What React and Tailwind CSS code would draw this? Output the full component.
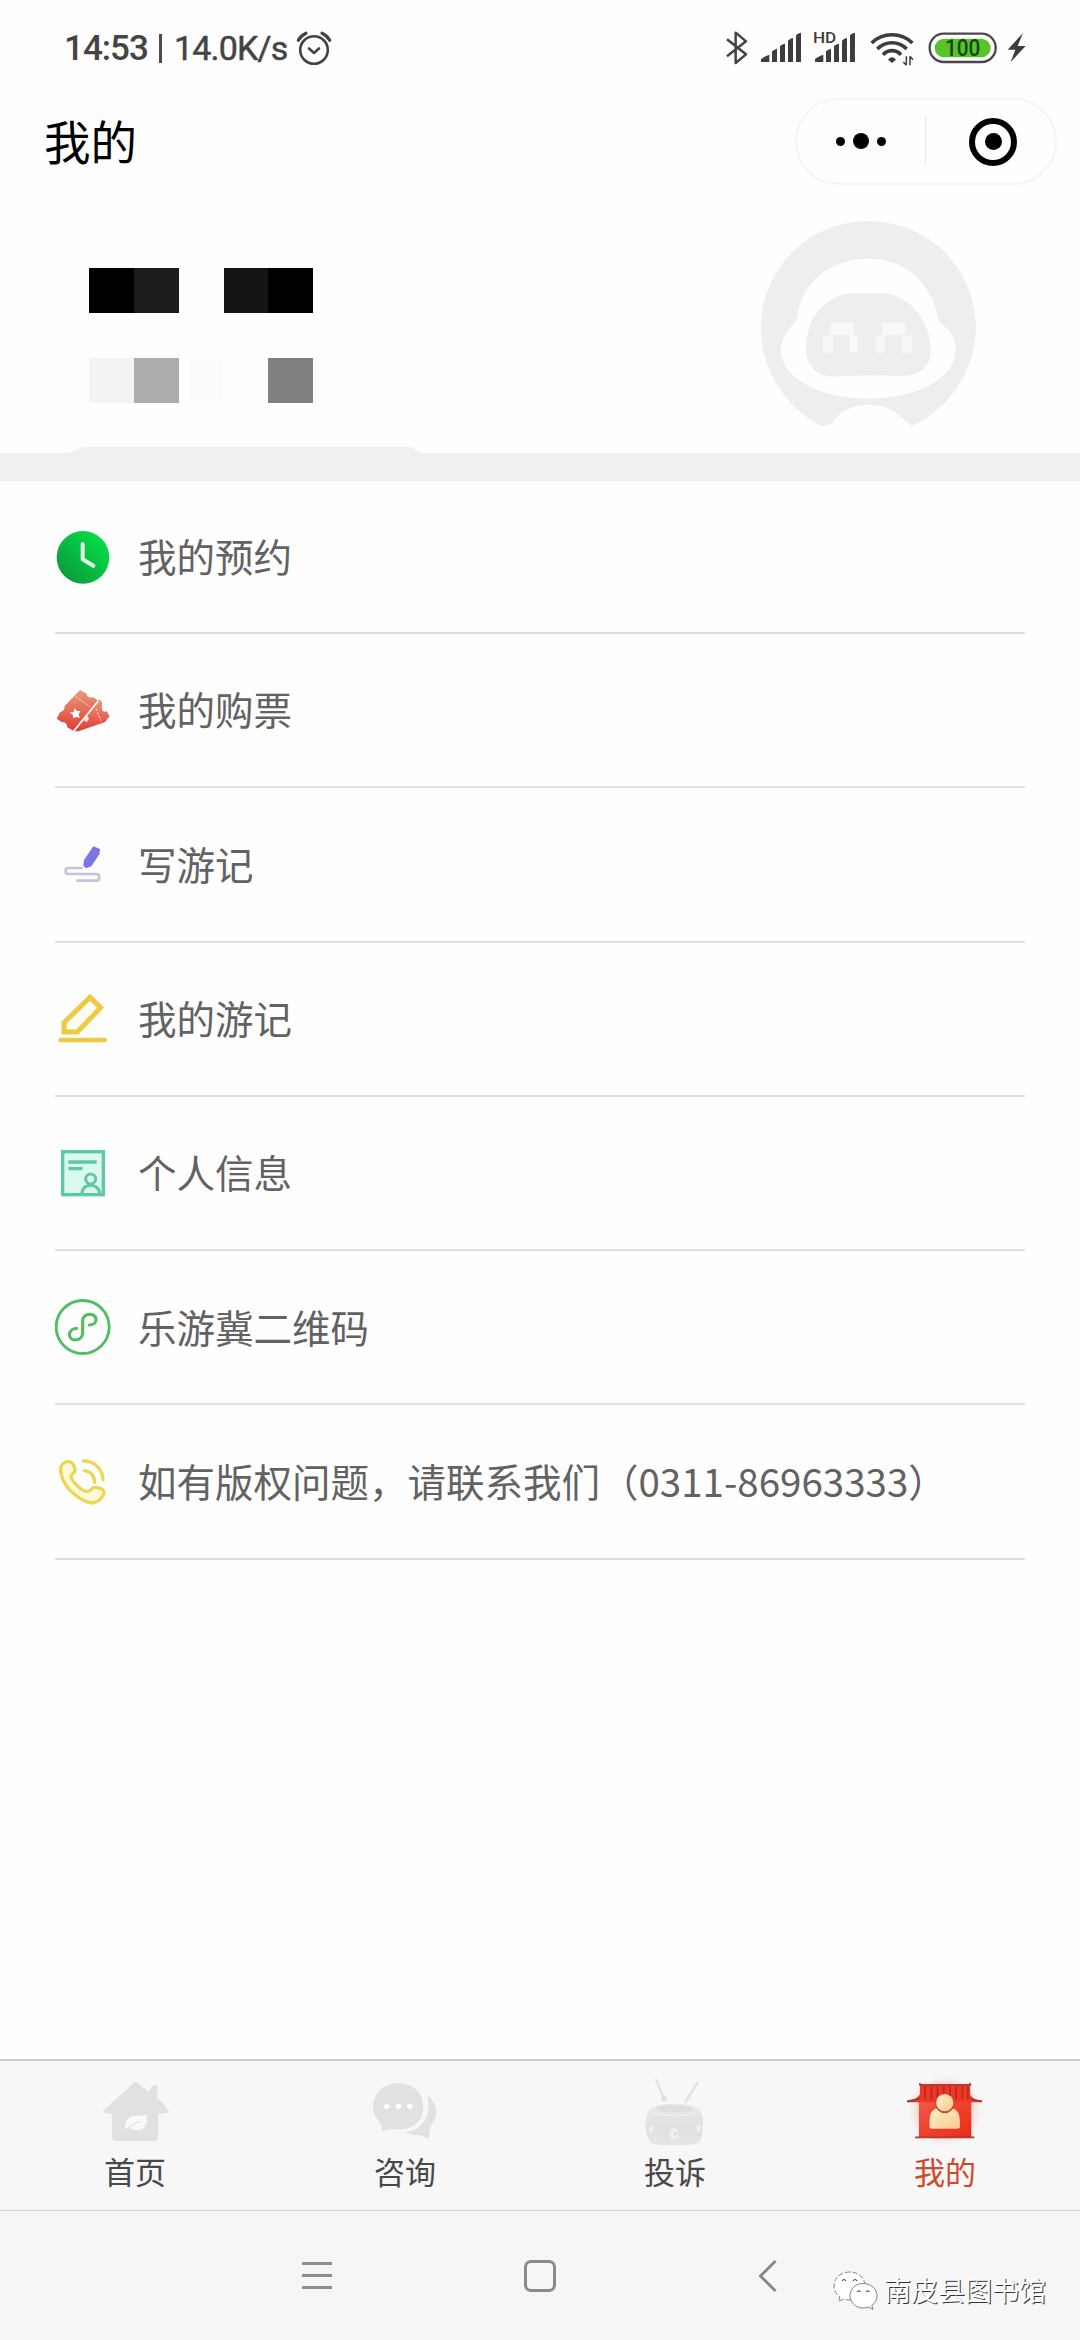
import React from "react";

function StatusBar() {
  return (
    <div className="flex h-24 items-center pl-[64px] pr-[54px] text-[#444]">
      <span className="w-[84px] font-['Roboto'] text-[35px] leading-none font-medium tracking-[-1px] whitespace-nowrap">14:53</span>
      <span className="ml-[11px] h-[29px] w-[3px] bg-[#4c4c4c]" />
      <span className="ml-[12px] w-[114px] font-['Roboto'] text-[34px] leading-none tracking-[-0.8px] whitespace-nowrap [-webkit-text-stroke:0.5px_#444]">14.0K/s</span>
      <svg className="ml-[8px] h-[36px] w-[36px]" viewBox="0 0 36 36" fill="none" stroke="#444" strokeWidth="2.6" strokeLinecap="round" strokeLinejoin="round">
        <circle cx="18" cy="20" r="13.8" />
        <path d="M13 18.5l5 4.5 5-4.5" />
        <path d="M2.3 10.3C4 7 6.700 4.700 10 3.200M33.700 10.300C32 7 29.300 4.700 26 3.200" strokeWidth="3.200" />
      </svg>
      <div className="ml-auto flex items-center">
        <svg className="h-9 w-[25px]" viewBox="135 90 75 108" fill="none" stroke="#444" strokeWidth="7.500">
          <path d="M141 118L198 163L167 189V98L198 124L141 169" strokeLinejoin="round" />
        </svg>
        <svg className="ml-[10px] h-9 w-[42px]" viewBox="240 90 126 108" fill="#3d3d3d">
          <path d="M243 186V178Q250 170 268 164V186ZM276 186V154Q283 148 291 146V186ZM300 186V138Q307 132 315 131V186ZM324 186V122Q331 115 339 114V186ZM348 186V106Q355 99 363 98V186Z" />
        </svg>
        <svg className="ml-[11px] h-9 w-[43.300px]" viewBox="399 90 130 108" fill="#3d3d3d">
          <path d="M405 186V178Q412 170 430 164V186ZM438 186V154Q445 148 453 146V186ZM462 186V138Q469 132 477 131V186ZM486 186V122Q493 115 501 114V186ZM510 186V106Q517 99 525 98V186Z" />
          <text x="399" y="129" fontFamily="Roboto" fontSize="46" fontWeight="500" textLength="70" lengthAdjust="spacingAndGlyphs">HD</text>
        </svg>
        <svg className="ml-[13.700px] h-9 w-[45px]" viewBox="570 90 135 108" fill="none" stroke="#3d3d3d" strokeWidth="11">
          <path d="M575 129C608 96 664 96 697 129M592 147C616 122 656 122 680 147M609 164C624 148 648 148 663 164" />
          <path d="M624 179Q636 165 648 179L636 189Z" fill="#3d3d3d" stroke="none" />
          <path d="M679 169V196M690 169V196M679 196l-9-10M690 169l9 10" strokeWidth="4.500" />
        </svg>
        <svg className="ml-[13.300px] h-9 w-[69px]" viewBox="745 90 207 108">
          <rect x="750" y="101" width="198" height="85" rx="42" fill="#fff" stroke="#484848" strokeWidth="7" />
          <rect x="765" y="116" width="168" height="56" rx="28" fill="#58c32b" />
          <text x="849" y="169" textAnchor="middle" textLength="106" lengthAdjust="spacingAndGlyphs" fontFamily="Roboto" fontSize="70" fontWeight="500" fill="#184510">100</text>
        </svg>
        <svg className="ml-[8.700px] h-9 w-5" viewBox="978 90 60 108" fill="#3d3d3d">
          <path d="M1029 99L983 149H1006L992 186L1037 138H1013Z" />
        </svg>
      </div>
    </div>
  );
}

function TitleBar() {
  return (
    <div className="flex h-[90px] items-center justify-between pr-[23px] pl-[44px]">
      <h1 className="pb-[2px] text-[46.500px] leading-none font-normal text-black">我的</h1>
      <div className="flex h-[87px] w-[262px] items-center rounded-full border-2 border-[#f5f5f5]">
        <div className="flex w-[128px] items-center justify-center gap-[8px]">
          <span className="h-[9px] w-[9px] rounded-full bg-black" />
          <span className="h-4 w-4 rounded-full bg-black" />
          <span className="h-[9px] w-[9px] rounded-full bg-black" />
        </div>
        <span className="h-12 w-px bg-[#e6e6e6]" />
        <div className="flex flex-1 items-center justify-center pl-[5px]">
          <span className="mt-[1px] flex h-12 w-12 items-center justify-center rounded-full border-[6.500px] border-black">
            <span className="h-[17px] w-[17px] rounded-full bg-black" />
          </span>
        </div>
      </div>
    </div>
  );
}

function Profile() {
  return (
    <div className="flex h-[267px] justify-between pr-[100px] pl-[89px]">
      <div className="flex flex-col pt-[82px]">
        <div className="flex h-[45px]">
          <span className="w-[45px] bg-black" />
          <span className="w-[45px] bg-[#1c1c1c]" />
          <span className="w-[45px]" />
          <span className="w-[44px] bg-[#141414]" />
          <span className="w-[45px] bg-black" />
        </div>
        <div className="mt-[45px] flex h-[45px]">
          <span className="w-[45px] bg-[#f3f3f3]" />
          <span className="w-[45px] bg-[#acacac]" />
          <span className="ml-[11px] w-[33px] bg-[#fcfcfc]" />
          <span className="ml-[45px] w-[45px] bg-[#808080]" />
        </div>
      </div>
      <svg className="mt-[31px] h-[213px] w-[224px]" viewBox="168 51 672 639" fill="#eee">
        <path d="M360 676C250 615 183 505 183 385C183 205 326 63 505 63C684 63 828 205 828 385C828 505 752 625 636 678C590 640 570 615 510 614C450 614 410 640 400 668Q380 678 360 676Z" />
        <path d="M505 176C610 176 695 240 717 365C745 385 767 410 767 450C767 540 640 596 505 596C370 596 243 540 243 450C243 410 265 390 292 360C300 240 400 176 505 176Z" fill="#fefefe" />
        <path d="M440 280H565C640 300 692 370 692 450C692 500 660 524 610 528Q505 522 400 530C350 528 318 500 318 440C322 350 370 300 440 280Z" />
        <path d="M369 458V407H392V383H460V407H472V458H448V405H399V458ZM527 458V407H548V383H614V407H636V458H606V405H554V458Z" fill="#f8f8f8" />
        <path d="M392 368H460V400H392ZM546 368H616V400H546Z" fill="#f8f8f8" />
      </svg>
    </div>
  );
}

function ClockIcon() {
  return (
    <svg className="h-14 w-14" viewBox="75 112 168 168">
      <defs>
        <linearGradient id="clock" x1="0" y1="1" x2="1" y2="0">
          <stop offset="0.1" stopColor="#0a9a3c" />
          <stop offset="0.850" stopColor="#05dc46" />
        </linearGradient>
      </defs>
      <circle cx="159" cy="197" r="79" fill="url(#clock)" />
      <path d="M158 157V203L190 222" fill="none" stroke="#e4ffea" strokeWidth="12" strokeLinecap="round" strokeLinejoin="round" />
    </svg>
  );
}

function TicketIcon() {
  return (
    <svg className="h-14 w-14" viewBox="75 576 168 168">
      <defs>
        <linearGradient id="ticket" x1="0" y1="0" x2="0" y2="1">
          <stop offset="0" stopColor="#eb9a7e" />
          <stop offset="1" stopColor="#df3d32" />
        </linearGradient>
      </defs>
      <path d="M150 600L170 611Q172 626 190 622L204 632L130 722L112 712Q110 695 96 697L80 686L90 667Q105 662 104 648Z" fill="url(#ticket)" />
      <path d="M207 628L216 635V660Q222 668 230 663L239 680Q228 688 226 696L145 724H134Z" fill="url(#ticket)" />
      <path d="M134 654L141 663L151 663L146 673L149 684L139 681L129 685L129 675L119 668L131 666Z" fill="#fff" />
      <path d="M137 620L179 649M198 656L213 692" fill="none" stroke="#ffe4dc" strokeWidth="3" strokeDasharray="7 5" />
      <path d="M204 634L132 722" stroke="#fff" strokeWidth="5" />
      <path d="M162 692L171 675L177 686L170 696Z" fill="#ffe4dc" />
    </svg>
  );
}

function WriteIcon() {
  return (
    <svg className="h-14 w-14" viewBox="75 109 168 168">
      <path d="M158 205H114Q107 205 107 214Q107 223 114 223H200Q208 223 208 233Q208 243 200 243H139" fill="none" stroke="#c3c3dd" strokeWidth="8" />
      <path d="M190 140L210 148L208 164L184 200L168 206L160 199L162 181Z" fill="#7d75e3" />
    </svg>
  );
}

function EditIcon() {
  return (
    <svg className="h-14 w-14" viewBox="75 572 168 168" fill="none" stroke="#edca42">
      <path d="M102 667L180 591L212 622L142 695H102Z" strokeWidth="15" fill="#fffdf2" />
      <path d="M92 719H224" strokeWidth="14" strokeLinecap="round" />
    </svg>
  );
}

function ProfileIcon() {
  return (
    <svg className="h-14 w-14" viewBox="75 75 168 168" fill="none" stroke="#5cc9a0" strokeWidth="10">
      <rect x="98" y="95" width="122" height="129" fill="#dcf9ee" />
      <path d="M115 126H200M115 146H158" />
      <circle cx="182" cy="177" r="15" strokeWidth="9" />
      <path d="M155 223Q158 196 182 196Q206 196 210 223" strokeWidth="9" />
    </svg>
  );
}

function MiniProgramIcon() {
  return (
    <svg className="h-14 w-14" viewBox="75 538 168 168" fill="none" stroke="#54bd64">
      <circle cx="158" cy="622" r="79.500" strokeWidth="8.500" />
      <path d="M178 616C205 616 204 584 180 584C166 584 158 592 158 604V640C158 652 150 661 136 661C112 661 112 627 140 626" strokeWidth="9.500" strokeLinecap="round" />
    </svg>
  );
}

function PhoneIcon() {
  return (
    <svg className="h-14 w-14" viewBox="75 101 168 168" fill="none" stroke="#ead75a" strokeWidth="10" strokeLinecap="round" strokeLinejoin="round">
      <path d="M103 127Q120 119 129 131L135 145Q137 154 127 161Q119 167 127 179Q144 203 164 212Q177 216 183 207Q191 198 203 202L216 206Q226 214 219 226Q206 246 187 248Q157 247 118 208Q93 178 92 151Q91 133 103 127Z" fill="#fff9d8" />
      <path d="M160 122C194 122 218 147 219 179M163 151C182 153 193 166 194 186" />
    </svg>
  );
}

const rows = [
  { label: "我的预约", Icon: ClockIcon },
  { label: "我的购票", Icon: TicketIcon },
  { label: "写游记", Icon: WriteIcon },
  { label: "我的游记", Icon: EditIcon },
  { label: "个人信息", Icon: ProfileIcon },
  { label: "乐游冀二维码", Icon: MiniProgramIcon },
  { label: "如有版权问题，请联系我们（0311-86963333）", Icon: PhoneIcon },
];

function Menu() {
  return (
    <ul className="mx-[55px] flex flex-col">
      {rows.map(({ label, Icon }) => (
        <li key={label} className="flex h-[154.300px] items-center gap-[27px] border-b-2 border-[#dfdfdf] first:h-[153px]">
          <Icon />
          <span className="pb-[3px] text-[38.500px] leading-none whitespace-nowrap text-[#626262]">{label}</span>
        </li>
      ))}
    </ul>
  );
}

function HomeIcon() {
  return (
    <svg className="h-20 w-[90px]" viewBox="261 75 261.400 240" preserveAspectRatio="none" fill="#e1e1e1">
      <path d="M391 126Q397 126 402 132L432 155L442 138Q450 130 457 139V175Q480 193 490 216Q478 222 459 221V290Q458 303 445 303H340Q326 303 325 290V222Q308 222 298 216Q304 204 318 195Z" />
      <path d="M362 268Q362 235 385 229L426 225V246Q422 267 402 270Q385 270 375 264Z" fill="#f9f9f9" />
      <path d="M366 270Q382 252 408 245" fill="none" stroke="#e1e1e1" strokeWidth="4" />
    </svg>
  );
}

function ChatIcon() {
  return (
    <svg className="h-20 w-[90px]" viewBox="1045 75 261.400 240" preserveAspectRatio="none" fill="#e1e1e1">
      <path d="M1157 130C1199 130 1229 160 1229 200C1229 245 1195 270 1155 268Q1134 265 1109 274Q1109 252 1098 240C1087 228 1083 216 1083 200C1083 160 1115 130 1157 130Z" />
      <path d="M1241 166Q1259 180 1268 213Q1264 240 1249 260L1244 297Q1228 284 1200 284L1176 277C1215 274 1240 245 1244 205Q1244 185 1241 166Z" />
      <g fill="#fff">
        <ellipse cx="1123" cy="199" rx="8" ry="8" />
        <ellipse cx="1157" cy="199" rx="8" ry="8" />
        <ellipse cx="1190" cy="199" rx="8" ry="8" />
      </g>
    </svg>
  );
}

function DrumIcon() {
  return (
    <svg className="h-20 w-[90px]" viewBox="261 75 261.400 240" preserveAspectRatio="none">
      <defs>
        <linearGradient id="drum" x1="0" y1="0" x2="0" y2="1">
          <stop offset="0" stopColor="#e9e9e9" />
          <stop offset="0.6" stopColor="#e0e0e0" />
          <stop offset="1" stopColor="#e6e6e6" />
        </linearGradient>
      </defs>
      <path d="M337 120L362 180M457 128L422 186" stroke="#e2e2e2" strokeWidth="7" strokeLinecap="round" />
      <ellipse cx="360" cy="176" rx="9" ry="8" fill="#e0e0e0" />
      <path d="M325 202Q350 191 390 191Q435 191 458 203Q474 222 473 252Q472 290 462 308Q430 319 390 319Q350 319 320 308Q306 285 306 250Q308 216 325 202Z" fill="url(#drum)" />
      <ellipse cx="391" cy="206" rx="54" ry="11" fill="#dedede" />
      <path d="M322 210Q330 226 391 227Q450 226 463 209" fill="none" stroke="#eeeeee" strokeWidth="5" />
      <ellipse cx="389" cy="281" rx="13" ry="17" fill="#f1f1f1" />
      <path d="M390 275L401 280L391 290Z" fill="#dcdcdc" />
      <ellipse cx="323" cy="267" rx="6" ry="12" fill="#f0f0f0" />
      <ellipse cx="460" cy="265" rx="6" ry="11" fill="#f0f0f0" />
    </svg>
  );
}

function MineIcon() {
  return (
    <svg className="h-20 w-[90px]" viewBox="1045 75 261.400 240" preserveAspectRatio="none">
      <defs>
        <radialGradient id="glow">
          <stop offset="0.650" stopColor="#ffd0cc" />
          <stop offset="1" stopColor="#f7f7f7" stopOpacity="0" />
        </radialGradient>
        <linearGradient id="house" x1="0" y1="0" x2="1" y2="1">
          <stop offset="0" stopColor="#f35a47" />
          <stop offset="1" stopColor="#ec2816" />
        </linearGradient>
        <linearGradient id="person" x1="0" y1="0" x2="1" y2="1">
          <stop offset="0" stopColor="#fff0cc" />
          <stop offset="1" stopColor="#fbc890" />
        </linearGradient>
      </defs>
      <ellipse cx="1176" cy="212" rx="116" ry="116" fill="url(#glow)" />
      <rect x="1100" y="180" width="152" height="112" fill="url(#house)" />
      <path d="M1103 132H1249V165Q1258 181 1283 181V187H1066V181Q1094 179 1103 163Z" fill="#e93a27" />
      <path d="M1118 139V178M1136 139V178M1154 139V178M1172 139V166M1190 139V178M1208 139V178M1226 139V178M1242 139V178" stroke="#c2261b" strokeWidth="5" />
      <path d="M1103 129V135H1249V129M1066 184Q1092 182 1103 174M1283 184Q1260 182 1249 174M1089 292H1261" fill="none" stroke="#a83b38" strokeWidth="5" />
      <path d="M1131 262V238Q1132 205 1160 203H1192Q1218 208 1219 240V262Q1218 266 1212 266H1138Q1131 266 1131 262Z" fill="url(#person)" />
      <ellipse cx="1175" cy="192" rx="27" ry="28" fill="#c94a2c" />
      <ellipse cx="1175" cy="188" rx="25" ry="26" fill="url(#person)" />
    </svg>
  );
}

const tabs = [
  { label: "首页", Icon: HomeIcon },
  { label: "咨询", Icon: ChatIcon },
  { label: "投诉", Icon: DrumIcon },
  { label: "我的", Icon: MineIcon, active: true },
];

function TabBar() {
  return (
    <div className="grid h-[151px] grid-cols-4 border-t-2 border-[#cacaca] bg-[#f7f7f7]">
      {tabs.map(({ label, Icon, active }) => (
        <div key={label} className="flex flex-col items-center pt-[4px]">
          <Icon />
          <span className={active ? "mt-[10px] text-[31px] leading-none text-[#cf4a2c]" : "mt-[10px] text-[31px] leading-none text-[#484848]"}>{label}</span>
        </div>
      ))}
    </div>
  );
}

function NavBar() {
  return (
    <div className="flex h-[130px] items-center border-t border-[#d5d5d5] bg-[#f6f6f6]">
      <div className="ml-[302px] flex w-[30px] flex-col gap-[9px]">
        <span className="h-[3px] bg-[#8d8d8d]" />
        <span className="h-[3px] bg-[#8d8d8d]" />
        <span className="h-[3px] bg-[#8d8d8d]" />
      </div>
      <span className="ml-[192px] h-8 w-8 rounded-[7px] border-[3px] border-[#8a8a8a]" />
      <svg className="ml-[202px] h-8 w-5" viewBox="0 0 20 32" fill="none" stroke="#858585" strokeWidth="2.800">
        <path d="M17.500 1L2.500 16L17.500 31" />
      </svg>
      <div className="mt-[28px] ml-[55px] flex items-center gap-[6px]">
        <svg className="h-[40px] w-[45px]" viewBox="0 0 45 40" fill="#fff" stroke="#777" strokeWidth="0.900">
          <path d="M17 2C8 2 1 8 1 16C1 21 3.500 24.500 7 27L5.500 31.500L11 29Q14 30.200 18 30C27 29 32 23 32 16C32 8 25 2 17 2Z" strokeDasharray="5 2" />
          <path d="M30 13.500C22.500 13.500 17 19 17 25.500C17 32.500 23 38 30 38Q33 38 35.500 37L40 39.500L38.800 35.500C42 33 44 30 44 25.500C44 19 38 13.500 30 13.500Z" />
          <path d="M9 11q2-3 4 0M20 11q2-3 4 0M24 22q1.800-2.500 3.600 0M33 22q1.800-2.500 3.600 0" fill="none" stroke="#444" strokeWidth="1.200" />
        </svg>
        <span className="text-[27px] leading-none whitespace-nowrap text-[#fbfbfb] [text-shadow:1px_1px_0.500px_#333]">南皮县图书馆</span>
      </div>
    </div>
  );
}

export default function App() {
  return (
    <div className="flex h-[2340px] w-[1080px] flex-col overflow-hidden bg-[#fefefe] font-['Noto_Sans_CJK_SC',sans-serif]">
      <StatusBar />
      <TitleBar />
      <Profile />
      <div className="relative h-7 bg-[#f0f0f0]">
        <span className="absolute -top-1.5 left-[68px] h-1.5 w-[354px] bg-[#f1f1f1] [clip-path:polygon(4%_0,97%_0,100%_100%,0_100%)]" />
      </div>
      <Menu />
      <div className="flex-1" />
      <TabBar />
      <NavBar />
    </div>
  );
}
